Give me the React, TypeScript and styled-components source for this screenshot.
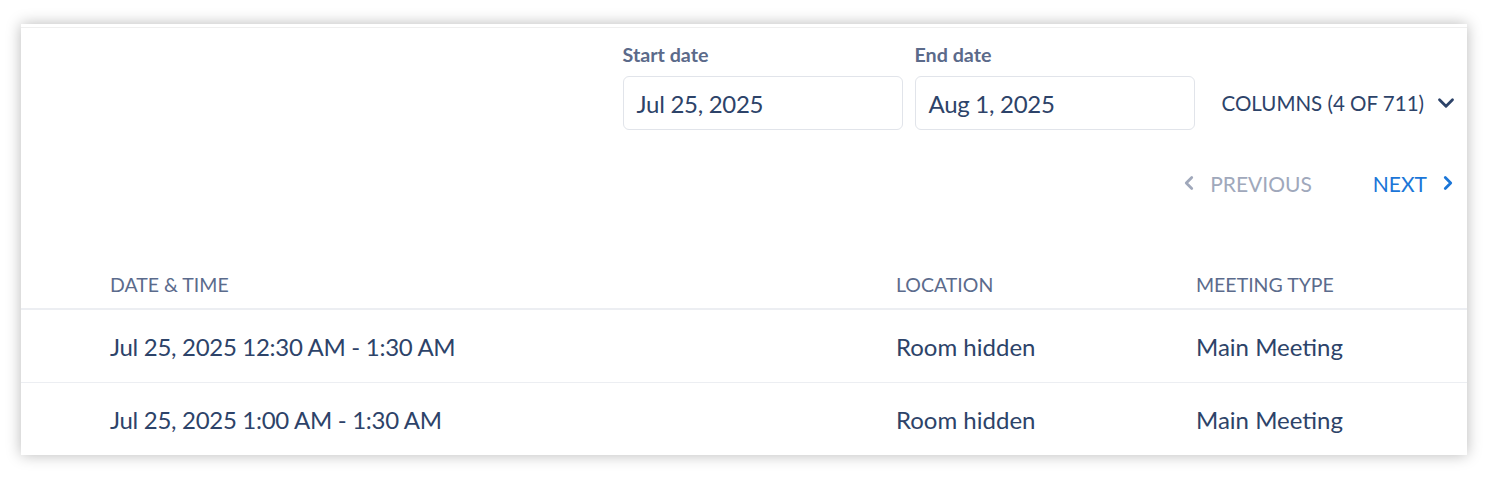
import React from 'react';
import styled, { createGlobalStyle } from 'styled-components';
import { ChevronDown, ChevronLeft, ChevronRight } from 'lucide-react';

const GlobalStyle = createGlobalStyle`
    body {
        margin: 0;
        background: #ffffff;
        font-family: Lato, "Open Sans", sans-serif;
    }
`;

const Page = styled.div`
    padding: 24px 20px 25px 21px;
`;

const Card = styled.div`
    background: #ffffff;
    box-shadow: 0 0 14px rgba(0, 0, 0, 0.28), inset 0 3px 0 #ffffff, inset 0 4px 0 #efefef;
`;

const Toolbar = styled.div`
    display: flex;
    justify-content: flex-end;
    align-items: flex-end;
    padding: 21px 8px 0 0;
`;

const Field = styled.label`
    display: flex;
    flex-direction: column;
    width: 280px;
    margin-right: 12px;
`;

const FieldLabel = styled.span`
    font-size: 19.7px;
    line-height: 20px;
    font-weight: 700;
    color: #5b6a8a;
    margin-bottom: 11px;
`;

const DateInput = styled.div`
    height: 52px;
    border: 1px solid #e1e4ea;
    border-radius: 6px;
    display: flex;
    align-items: center;
    padding: 0 13px;
    font-size: 24px;
    letter-spacing: -0.28px;
    color: #2d4369;
`;

const ColumnsButton = styled.button`
    display: flex;
    align-items: center;
    gap: 9px;
    height: 54px;
    margin-left: 15px;
    padding: 0;
    border: none;
    background: none;
    font-family: inherit;
    font-size: 20.5px;
    color: #2d4369;
    text-transform: uppercase;
`;

const Pager = styled.div`
    display: flex;
    justify-content: flex-end;
    gap: 61px;
    padding: 41px 8px 0 0;
`;

const PageLink = styled.button<{ $active?: boolean }>`
    display: flex;
    align-items: center;
    gap: 10px;
    height: 24px;
    padding: 0;
    border: none;
    background: none;
    font-family: inherit;
    font-size: 21px;
    text-transform: uppercase;
    color: ${p => (p.$active ? '#1b76d8' : '#a0a8bb')};
`;

const Table = styled.div`
    margin-top: 65px;
`;

const Row = styled.div<{ $head?: boolean }>`
    display: grid;
    grid-template-columns: 786px 300px 1fr;
    align-items: center;
    box-sizing: border-box;
    height: ${p => (p.$head ? '49px' : '72px')};
    padding-left: 89px;
    border-bottom: ${p => (p.$head ? '1px solid #eceef2' : 'none')};
    & + & {
        border-top: 1px solid #eceef2;
        height: 73px;
    }
`;

const HeadCell = styled.div`
    font-size: 19.5px;
    color: #5b6b8c;
    text-transform: uppercase;
`;

const Cell = styled.div<{ $tight?: boolean }>`
    font-size: 24px;
    letter-spacing: ${p => (p.$tight ? '-0.3px' : '0')};
    color: #2d4369;
`;

const meetings = [
    { time: 'Jul 25, 2025 12:30 AM - 1:30 AM', location: 'Room hidden', type: 'Main Meeting' },
    { time: 'Jul 25, 2025 1:00 AM - 1:30 AM', location: 'Room hidden', type: 'Main Meeting' },
];

const App: React.FC = () => {
    return (
        <Page>
            <GlobalStyle />
            <Card>
                <Toolbar>
                    <Field>
                        <FieldLabel>Start date</FieldLabel>
                        <DateInput>Jul 25, 2025</DateInput>
                    </Field>
                    <Field>
                        <FieldLabel>End date</FieldLabel>
                        <DateInput>Aug 1, 2025</DateInput>
                    </Field>
                    <ColumnsButton>
                        Columns (4 of 711)
                        <ChevronDown size={26} strokeWidth={2.6} />
                    </ColumnsButton>
                </Toolbar>
                <Pager>
                    <PageLink>
                        <ChevronLeft size={22} strokeWidth={3} />
                        Previous
                    </PageLink>
                    <PageLink $active>
                        Next
                        <ChevronRight size={22} strokeWidth={3} />
                    </PageLink>
                </Pager>
                <Table>
                    <Row $head>
                        <HeadCell>Date &amp; Time</HeadCell>
                        <HeadCell>Location</HeadCell>
                        <HeadCell>Meeting Type</HeadCell>
                    </Row>
                    {meetings.map((m, i) => (
                        <Row key={i}>
                            <Cell $tight>{m.time}</Cell>
                            <Cell>{m.location}</Cell>
                            <Cell>{m.type}</Cell>
                        </Row>
                    ))}
                </Table>
            </Card>
        </Page>
    );
};

export default App;
